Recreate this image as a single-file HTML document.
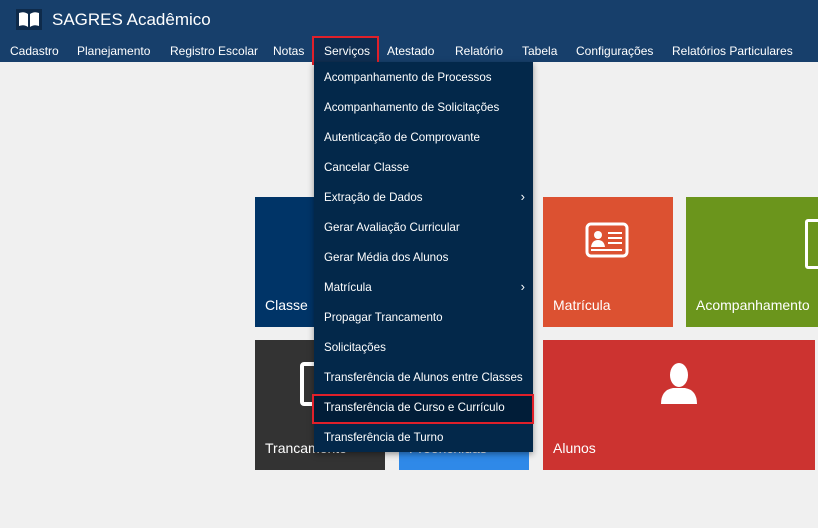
<!DOCTYPE html>
<html><head><meta charset="utf-8"><style>
body{margin:0;width:818px;height:528px;background:#f0f0f0;font-family:"Liberation Sans",sans-serif;position:relative;overflow:hidden}
.hdr{position:absolute;left:0;top:0;width:818px;height:62px;background:#173f6b}
.logo{position:absolute;left:16px;top:9px;width:26px;height:21px;background:#0e2a4a}
.title{position:absolute;left:52px;top:10px;color:#fff;font-size:17px}
.nav{position:absolute;top:44px;color:#fff;font-size:12px}
.srv{position:absolute;left:312px;top:36px;width:63px;height:25px;border:2px solid #e0202a;background:#0f2e52}
.tile{position:absolute;color:#fff;font-size:14px}
.tile span{position:absolute;left:10px;bottom:14px}
.menu{position:absolute;left:314px;top:62px;width:219px;height:390px;background:#03284a;box-shadow:0 2px 6px rgba(0,0,0,.4)}
.mi{position:absolute;left:10px;color:#fff;font-size:11.6px}
.ar{position:absolute;right:8px;color:#fff;font-size:13px}
.sel{position:absolute;left:312px;top:394px;width:218px;height:26px;border:2px solid #e0202a;background:#011d38}
</style></head><body>
<div class="hdr"></div>
<div class="logo"><svg width="26" height="21" viewBox="0 0 26 21"><path d="M3 4 Q8 2 12 5 L12 18 Q8 15 3 17Z M23 4 Q18 2 14 5 L14 18 Q18 15 23 17Z" fill="#fff"/></svg></div>
<div class="title">SAGRES Acadêmico</div>
<div class="srv"></div>
<div class="nav" style="left:10px">Cadastro</div>
<div class="nav" style="left:77px">Planejamento</div>
<div class="nav" style="left:170px">Registro Escolar</div>
<div class="nav" style="left:273px">Notas</div>
<div class="nav" style="left:324px">Serviços</div>
<div class="nav" style="left:387px">Atestado</div>
<div class="nav" style="left:455px">Relatório</div>
<div class="nav" style="left:522px">Tabela</div>
<div class="nav" style="left:576px">Configurações</div>
<div class="nav" style="left:672px">Relatórios Particulares</div>

<div class="tile" style="left:255px;top:197px;width:130px;height:130px;background:#003467"><span>Classe</span></div>
<div class="tile" style="left:255px;top:340px;width:130px;height:130px;background:#333"><span>Trancamento</span><div style="position:absolute;left:45px;top:22px;width:36px;height:36px;border:4px solid #fff;border-radius:4px"></div></div>
<div class="tile" style="left:399px;top:340px;width:130px;height:130px;background:#2f89e8"><span>Preenchidas</span></div>
<div class="tile" style="left:543px;top:197px;width:130px;height:130px;background:#dc5131"><span>Matrícula</span>
<svg style="position:absolute;left:42px;top:25px" width="44" height="36" viewBox="0 0 44 36"><rect x="2" y="2" width="40" height="32" rx="4" fill="none" stroke="#fff" stroke-width="3"/><circle cx="13" cy="13" r="4" fill="#fff"/><path d="M6 25 Q7 18 13 18 Q19 18 20 25Z" fill="#fff"/><rect x="23" y="10" width="14" height="2" fill="#fff"/><rect x="23" y="15" width="14" height="2" fill="#fff"/><rect x="23" y="20" width="14" height="2" fill="#fff"/><rect x="6" y="27" width="31" height="2" fill="#fff"/></svg></div>
<div class="tile" style="left:686px;top:197px;width:140px;height:130px;background:#6b951c"><span>Acompanhamento</span><div style="position:absolute;left:119px;top:22px;width:14px;height:44px;border:3px solid #fff;border-radius:3px"></div></div>
<div class="tile" style="left:543px;top:340px;width:272px;height:130px;background:#cc3330"><span>Alunos</span>
<svg style="position:absolute;left:116px;top:22px" width="40" height="44" viewBox="0 0 40 44"><ellipse cx="20" cy="13" rx="9" ry="12" fill="#fff"/><path d="M2 42 Q2 28 14 26 L26 26 Q38 28 38 42Z" fill="#fff"/></svg></div>

<div class="menu">
<div class="mi" style="top:9px">Acompanhamento de Processos</div>
<div class="mi" style="top:39px">Acompanhamento de Solicitações</div>
<div class="mi" style="top:69px">Autenticação de Comprovante</div>
<div class="mi" style="top:99px">Cancelar Classe</div>
<div class="mi" style="top:129px">Extração de Dados</div><div class="ar" style="top:127px">›</div>
<div class="mi" style="top:159px">Gerar Avaliação Curricular</div>
<div class="mi" style="top:189px">Gerar Média dos Alunos</div>
<div class="mi" style="top:219px">Matrícula</div><div class="ar" style="top:217px">›</div>
<div class="mi" style="top:249px">Propagar Trancamento</div>
<div class="mi" style="top:279px">Solicitações</div>
<div class="mi" style="top:309px">Transferência de Alunos entre Classes</div>
<div class="mi" style="top:369px">Transferência de Turno</div>
</div>
<div class="sel"></div>
<div class="mi" style="left:324px;top:401px;position:absolute">Transferência de Curso e Currículo</div>
</body></html>
